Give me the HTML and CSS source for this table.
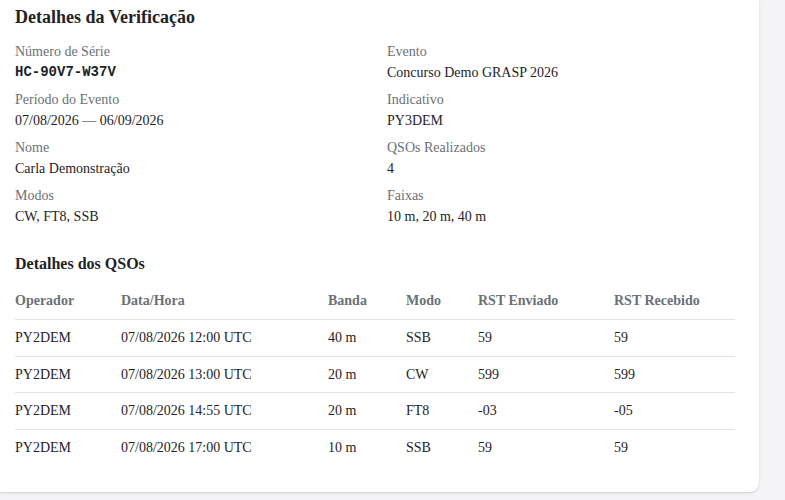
FILE: index.html
```html
<!DOCTYPE html>
<html lang="pt">
<head>
<meta charset="utf-8">
<link rel="stylesheet" href="styles.css">
</head>
<body>
<div class="card">
  <h2 class="title">Detalhes da Verificação</h2>
  <div class="info">
    <div class="item"><div class="label">Número de Série</div><div class="value mono">HC-90V7-W37V</div></div>
    <div class="item"><div class="label">Evento</div><div class="value">Concurso Demo GRASP 2026</div></div>
    <div class="item"><div class="label">Período do Evento</div><div class="value">07/08/2026 — 06/09/2026</div></div>
    <div class="item"><div class="label">Indicativo</div><div class="value">PY3DEM</div></div>
    <div class="item"><div class="label">Nome</div><div class="value">Carla Demonstração</div></div>
    <div class="item"><div class="label">QSOs Realizados</div><div class="value">4</div></div>
    <div class="item"><div class="label">Modos</div><div class="value">CW, FT8, SSB</div></div>
    <div class="item"><div class="label">Faixas</div><div class="value">10 m, 20 m, 40 m</div></div>
  </div>
  <h3 class="subtitle">Detalhes dos QSOs</h3>
  <table class="qsos">
    <colgroup>
      <col class="c-op"><col class="c-dt"><col class="c-band"><col class="c-mode"><col class="c-sent"><col class="c-recv">
    </colgroup>
    <thead>
      <tr><th>Operador</th><th>Data/Hora</th><th>Banda</th><th>Modo</th><th>RST Enviado</th><th>RST Recebido</th></tr>
    </thead>
    <tbody>
      <tr><td>PY2DEM</td><td>07/08/2026 12:00 UTC</td><td>40 m</td><td>SSB</td><td>59</td><td>59</td></tr>
      <tr><td>PY2DEM</td><td>07/08/2026 13:00 UTC</td><td>20 m</td><td>CW</td><td>599</td><td>599</td></tr>
      <tr><td>PY2DEM</td><td>07/08/2026 14:55 UTC</td><td>20 m</td><td>FT8</td><td>-03</td><td>-05</td></tr>
      <tr><td>PY2DEM</td><td>07/08/2026 17:00 UTC</td><td>10 m</td><td>SSB</td><td>59</td><td>59</td></tr>
    </tbody>
  </table>
</div>
</body>
</html>
```
FILE: styles.css
```css
html, body {
  margin: 0;
  padding: 0;
}
body {
  background: #f4f4f6;
  font-family: "Liberation Serif", "Times New Roman", serif;
  color: #1f2328;
  height: 500px;
  overflow: hidden;
}
.card {
  width: 720px;
  background: #ffffff;
  border-radius: 0 0 9px 0;
  padding: 5px 24px 26px 15px;
  box-shadow: 0 1px 3px rgba(0,0,0,0.10), 0 1px 2px rgba(0,0,0,0.06);
}
.title {
  margin: 0;
  font-size: 18px;
  line-height: 24px;
  font-weight: 700;
  color: #1f2328;
}
.info {
  display: grid;
  grid-template-columns: 348px 348px;
  column-gap: 24px;
  row-gap: 6px;
  margin-top: 12px;
}
.label {
  font-size: 14px;
  line-height: 21px;
  color: #6b7078;
}
.value {
  font-size: 14px;
  line-height: 21px;
  color: #1f2328;
}
.mono {
  font-family: "Liberation Mono", "Courier New", monospace;
  font-weight: 700;
  font-size: 14px;
}
.subtitle {
  margin: 25px 0 7px;
  font-size: 16px;
  line-height: 24px;
  font-weight: 700;
  color: #1f2328;
}
.qsos {
  width: 720px;
  table-layout: fixed;
  border-collapse: collapse;
  font-size: 14px;
}
.c-op { width: 106px; }
.c-dt { width: 207px; }
.c-band { width: 78px; }
.c-mode { width: 72px; }
.c-sent { width: 136px; }
.c-recv { width: 121px; }
.qsos th {
  text-align: left;
  font-weight: 700;
  color: #6b7078;
  padding: 8px 0;
  line-height: 20px;
  border-bottom: 1px solid #e3e4e7;
}
.qsos td {
  padding: 8px 0;
  line-height: 19.67px;
  color: #1f2328;
  border-bottom: 1px solid #e3e4e7;
}
.qsos tbody tr:last-child td {
  border-bottom: none;
}
```
